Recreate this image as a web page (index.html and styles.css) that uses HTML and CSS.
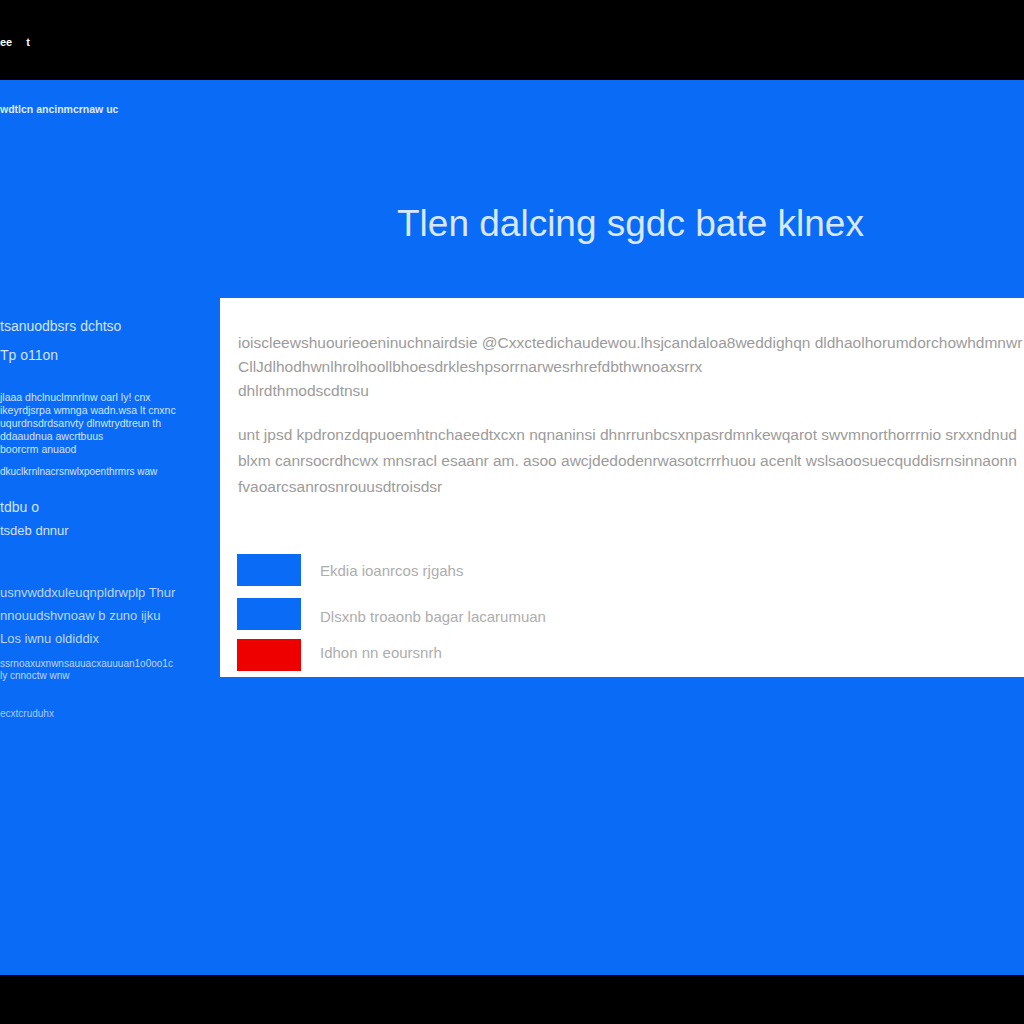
FILE: index.html
```html
<!DOCTYPE html>
<html lang="en">
<head>
<meta charset="utf-8">
<title>Tlen dalcing</title>
<link rel="stylesheet" href="styles.css">
</head>
<body>
<div class="page">
  <header class="topbar"><span>ee</span><span>t</span></header>
  <main class="stage">
    <aside class="side">
      <p class="crumb">wdtlcn ancinmcrnaw uc</p>
      <section class="group group-a">
        <h2>tsanuodbsrs dchtso</h2>
        <h2>Tp o11on</h2>
      </section>
      <section class="group group-b">
        <p>jlaaa dhclnuclmnrlnw oarl ly! cnx</p>
        <p>ikeyrdjsrpa wmnga wadn.wsa lt cnxnc</p>
        <p>uqurdnsdrdsanvty dlnwtrydtreun th</p>
        <p>ddaaudnua awcrtbuus</p>
        <p>boorcrm anuaod</p>
        <p class="fine">dkuclkrnlnacrsnwlxpoenthrmrs waw</p>
      </section>
      <section class="group group-c">
        <h3>tdbu o</h3>
        <h4>tsdeb dnnur</h4>
      </section>
      <section class="group group-d">
        <h4>usnvwddxuleuqnpldrwplp Thur</h4>
        <h4>nnouudshvnoaw b zuno ijku</h4>
        <h4>Los iwnu oldiddix</h4>
        <p class="fine">ssrnoaxuxnwnsauuacxauuuan1o0oo1c</p>
        <p class="fine">ly cnnoctw wnw</p>
      </section>
      <p class="fine group-e">ecxtcruduhx</p>
    </aside>
    <div class="content">
      <h1>Tlen dalcing sgdc bate klnex</h1>
      <section class="panel">
        <div class="copy">
          <p>ioiscleewshuourieoeninuchnairdsie @Cxxctedichaudewou.lhsjcandaloa8weddighqn dldhaolhorumdorchowhdmnwr</p>
          <p>CllJdlhodhwnlhrolhoollbhoesdrkleshpsorrnarwesrhrefdbthwnoaxsrrx</p>
          <p>dhlrdthmodscdtnsu</p>
        </div>
        <div class="copy copy-2">
          <p>unt jpsd kpdronzdqpuoemhtnchaeedtxcxn nqnaninsi dhnrrunbcsxnpasrdmnkewqarot swvmnorthorrrnio srxxndnud</p>
          <p>blxm canrsocrdhcwx mnsracl esaanr am. asoo awcjdedodenrwasotcrrrhuou acenlt wslsaoosuecquddisrnsinnaonn</p>
          <p>fvaoarcsanrosnrouusdtroisdsr</p>
        </div>
        <ul class="legend">
          <li class="item"><span class="swatch"></span><span>Ekdia ioanrcos rjgahs</span></li>
          <li class="item item-2"><span class="swatch"></span><span class="label-low">Dlsxnb troaonb bagar lacarumuan</span></li>
          <li class="item item-3"><span class="swatch red"></span><span class="label-high">Idhon nn eoursnrh</span></li>
        </ul>
      </section>
    </div>
  </main>
  <footer class="bottom"></footer>
</div>
</body>
</html>
```
FILE: styles.css
```css
* { box-sizing: border-box; }
html, body { margin: 0; padding: 0; }
body { background: #000; font-family: "Liberation Sans", Arial, sans-serif; }
p, h1, h2, h3, h4, ul { margin: 0; padding: 0; font-weight: 400; }
.page { width: 1024px; height: 1024px; display: flex; flex-direction: column; overflow: hidden; }
.topbar { height: 80px; flex: none; background: #000; color: #fff; font-size: 11px; font-weight: 700; display: flex; gap: 14px; padding-top: 36px; }
.stage { height: 895px; flex: none; background: #0a6cf6; display: flex; overflow: hidden; }
.bottom { flex: 1; background: #000; }

.side { width: 220px; flex: none; color: #d3e3fd; white-space: nowrap; overflow: hidden; padding-top: 23px; }
.crumb { font-size: 11px; line-height: 14px; font-weight: 700; color: #dce9ff; }
.side h2 { font-size: 14px; line-height: 29px; }
.side h3 { font-size: 14px; line-height: 24px; }
.side h4 { font-size: 13px; line-height: 23px; }
.side p { font-size: 10.5px; line-height: 13px; }
.side .fine { font-size: 10px; line-height: 12px; }
.group-a { margin-top: 196px; }
.group-b { margin-top: 21px; }
.group-b .fine { margin-top: 10px; }
.group-c { margin-top: 17px; }
.group-d { margin-top: 39px; color: #bdd5fc; }
.group-d h4 + .fine { margin-top: 8px; }
.side .group-e { margin-top: 26px; color: #a8c8fb; }

.content { flex: 1; min-width: 0; display: flex; flex-direction: column; }
.content h1 { font-size: 37px; line-height: 40px; margin-top: 124px; padding-left: 177px; color: #d9e7ff; white-space: nowrap; }
.panel { margin-top: 54px; height: 379px; background: #fff; padding: 33px 0 0 17px; white-space: nowrap; color: #9b9b9b; }
.copy { padding-left: 1px; }
.copy p { font-size: 15.5px; line-height: 24px; }
.copy-2 { margin-top: 19px; }
.copy-2 p { line-height: 26px; }
.legend { list-style: none; margin-top: 54px; color: #adadad; font-size: 15px; }
.item { display: flex; align-items: center; gap: 19px; height: 32px; }
.item-2 { margin-top: 12px; }
.item-3 { margin-top: 9px; }
.label-low { padding-top: 4px; }
.label-high { padding-bottom: 6px; }
.swatch { width: 64px; height: 32px; flex: none; background: #0a6cf6; }
.swatch.red { background: #ee0000; }
```
